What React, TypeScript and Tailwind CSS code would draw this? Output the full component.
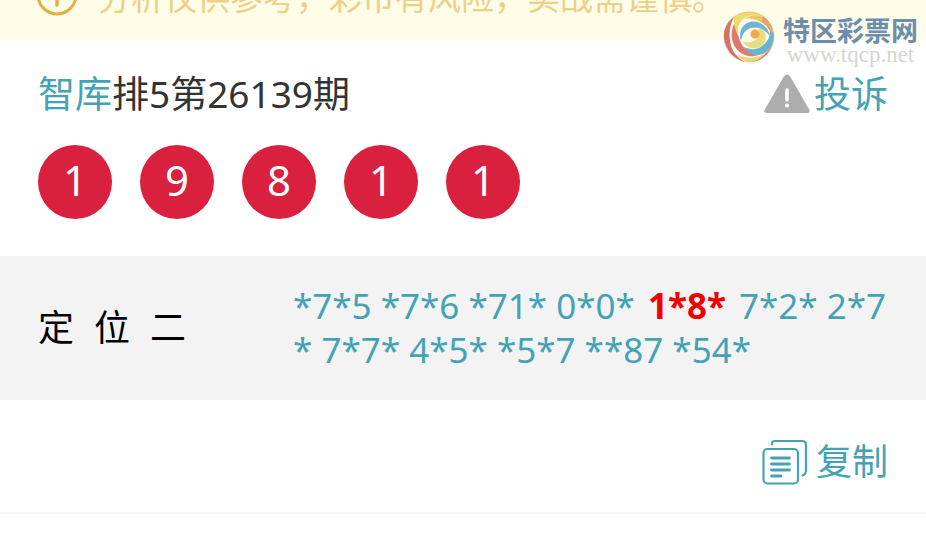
import { clsx } from 'clsx'

const balls = [1, 9, 8, 1, 1]

const picks = [
  '*7*5', '*7*6', '*71*', '0*0*', '1*8*', '7*2*', '2*7*',
  '7*7*', '4*5*', '*5*7', '**87', '*54*',
]
const hitIndex = 4

function NoticeIcon() {
  return (
    <svg width="42" height="42" viewBox="0 0 42 42" fill="none" stroke="#e6ae45" className="flex-shrink-0" aria-hidden="true">
      <circle cx="21" cy="21" r="19" strokeWidth="3" />
      <path d="M21 10v3M21 18v13" strokeWidth="3.500" strokeLinecap="round" />
    </svg>
  )
}

function WarningIcon() {
  return (
    <svg width="46" height="40" viewBox="0 0 46 40" aria-hidden="true">
      <path d="M19.800 2.400q3.200-4 6.400 0L45 35.200q2 3.800-2 3.800H3q-4 0-2-3.800z" fill="#adadad" />
      <path d="M23 16v10" stroke="#fff" strokeWidth="3.600" strokeLinecap="round" />
      <circle cx="23" cy="31.500" r="2.100" fill="#fff" />
    </svg>
  )
}

function CopyIcon() {
  return (
    <svg width="46" height="46" viewBox="0 0 46 46" fill="none" stroke="#43a3b5" strokeWidth="2.200" strokeLinecap="round" aria-hidden="true">
      <path d="M10 5.500V4.500q0-2.500 3-2.500H40q4 0 4 4v25q0 4.500-3.500 5.500" />
      <rect x="1.500" y="10" width="34.500" height="34.500" rx="4" />
      <path d="M9.500 19H27.500M9.500 25H27.500M9.500 31H27.500M9.500 37H19" strokeWidth="2.800" />
    </svg>
  )
}

function SiteLogo() {
  return (
    <svg width="52" height="52" viewBox="0 0 52 52" aria-hidden="true">
      <circle cx="26" cy="26" r="25" fill="#fffaf0" />
      <path d="M11 6C2 12-1 22 2 32c3 10 11 17 20 19-9-5-14-12-15-21C6 21 7 13 11 6z" fill="#d96f66" />
      <path d="M14 8c-6 8-7 18-3 26 5 10 17 14 27 9-10 0-18-5-21-13-3-7-3-15-3-22z" fill="#e0796c" />
      <path d="M11 6C20-1 33-1 42 6c-9-3-18-2-23 3-4 4-5 9-4 16-3-7-5-13-4-19z" fill="#f0dc68" />
      <path d="M22 8c8-7 21-4 26 6 3 6 3 11 2 15-2-9-7-16-14-19-5-2-10-3-14-2z" fill="#eec65e" />
      <path d="M38 11c6 3 10 9 12 17 1-10-3-18-10-23z" fill="#e8a565" />
      <path d="M18 30c-3-9 1-17 9-19 9-2 18 4 20 14-6-7-12-10-19-8-6 2-9 6-10 13z" fill="#6fb6d0" />
      <path d="M51 24c0 9-4 16-11 19-8 3-16 0-19-7 7 3 13 3 18-1 5-4 8-8 8-15 2 1 4 2 4 4z" fill="#69b5d0" />
      <path d="M42 22c3 7-2 14-9 15-6 1-11-2-13-7 6 3 12 1 15-4 1-3 1-5 0-8 3 0 6 1 7 4z" fill="#e6dc82" />
      <path d="M50 31c-2 11-11 19-22 20 5-3 12-5 16-10 3-3 5-6 6-10z" fill="#d9786b" />
      <path d="M14 43c8 5 18 5 27 0-4 6-10 8-15 8-5-1-9-4-12-8z" fill="#ecd674" />
      <circle cx="32" cy="23" r="4.500" fill="#efac45" />
      <circle cx="26" cy="26" r="25" fill="none" stroke="#c9a27e" strokeWidth="0.600" opacity="0.700" />
    </svg>
  )
}

function Watermark() {
  return (
    <div className="pointer-events-none absolute right-2 top-[9px] flex items-center gap-2">
      <SiteLogo />
      <div className="flex flex-col items-center whitespace-nowrap pt-2">
        <span className="text-[27px] font-bold leading-7 text-[#6c8eae]">特区彩票网</span>
        <span className="font-['Liberation_Serif',serif] text-[23px] leading-5 text-[#d6d5d0]">www.tqcp.net</span>
      </div>
    </div>
  )
}

export default function App() {
  return (
    <div className="relative min-h-screen bg-white font-['Noto_Sans','Noto_Sans_CJK_SC',sans-serif] text-[#333]">
      <div className="flex h-10 items-end gap-5 overflow-hidden whitespace-nowrap bg-[#fffce8] pb-6 pl-9 text-[#ecd086]">
        <NoticeIcon />
        <p className="text-[33px] leading-9">分析仅供参考，彩币有风险，实战需谨慎。</p>
      </div>
      <Watermark />

      <main>
        <section className="px-[38px] pb-[37px] pt-7">
          <div className="flex items-center justify-between">
            <h1 className="text-[37px] leading-[52px]">
              <a href="#" className="text-[#43a3b5]">智库</a>排5第26139期
            </h1>
            <button className="flex items-center gap-1 text-[37px] leading-[52px] text-[#43a3b5]">
              <WarningIcon />
              投诉
            </button>
          </div>
          <div className="mt-[25px] flex gap-7">
            {balls.map((n, i) => (
              <span key={i} className="flex size-[74px] items-center justify-center rounded-full bg-[#d9203e] pb-1 text-[42px] leading-none text-white">
                {n}
              </span>
            ))}
          </div>
        </section>

        <section className="flex items-center justify-between bg-[#f3f3f3] px-[38px] py-7">
          <h2 className="flex gap-5 text-4xl text-black">
            <span>定</span>
            <span>位</span>
            <span>二</span>
          </h2>
          <p className="w-[70%] max-w-[596px] break-all text-[35px] leading-11 text-[#43a3b5]">
            {picks.map((p, i) => (
              <span key={i}>
                <span className={clsx(i === hitIndex && 'px-1 font-bold text-[#f00000]')}>{p}</span>
                {i < picks.length - 1 && ' '}
              </span>
            ))}
          </p>
        </section>

        <div className="flex justify-end border-b-2 border-[#f5f5f5] px-[38px] pb-6 pt-9">
          <button className="flex items-center gap-2 text-[36px] leading-[52px] text-[#43a3b5]">
            <CopyIcon />
            复制
          </button>
        </div>
      </main>
    </div>
  )
}
